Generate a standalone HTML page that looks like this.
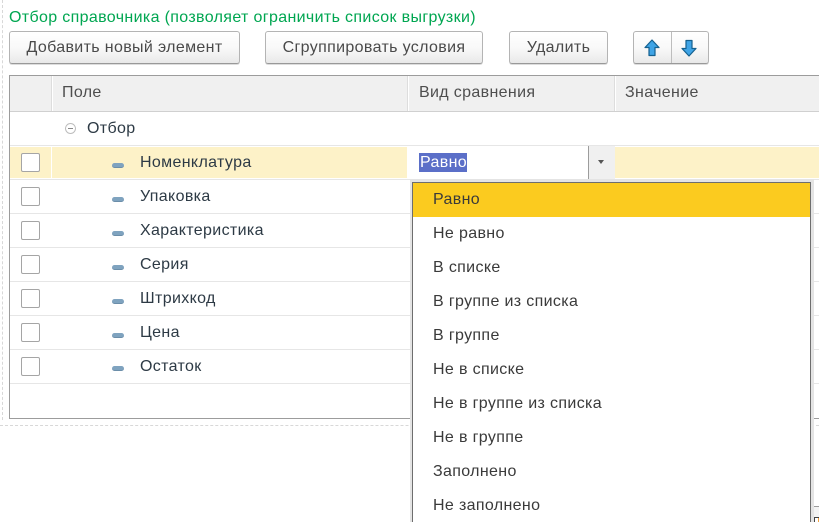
<!DOCTYPE html>
<html lang="ru">
<head>
<meta charset="utf-8">
<style>
html,body{margin:0;padding:0;background:#fff;width:819px;height:522px;overflow:hidden}
body{font-family:"Liberation Sans",Arial,sans-serif;font-size:16px;letter-spacing:.35px;color:#333}
#w{left:0;top:0;width:819px;height:522px;overflow:hidden;background:#fff}
div{position:absolute;box-sizing:border-box}
.t{white-space:nowrap;line-height:18px;height:18px}
.btn{top:31px;height:33px;border:1px solid #b4b4b4;border-bottom-color:#999;border-radius:3px;background:linear-gradient(#fff 0%,#f9f9f9 50%,#e9e9e9 100%);text-align:center;line-height:31px;color:#4a4a4a;white-space:nowrap;box-shadow:0 1px 0 #ddd}
.line{left:10px;width:809px;height:1px;background:#e6e6e6}
.cb{left:21px;width:19px;height:19px;border:1px solid #a5a5a5;border-radius:2px;background:#fff}
.dash{left:112px;width:12px;height:5px;border-radius:2.5px;background:#7fa3bf;border-bottom:1px solid #6b8ea9}
.name{left:140px;color:#2d3a45}
.head{top:84px;color:#4e4e4e}
.item{left:433px;color:#3a3a3a}
</style>
</head>
<body>
<div id="w">
<div style="left:2px;top:0;width:0;height:420px;border-left:1px dashed #d8d8d8"></div>
<div style="left:0;top:425px;width:819px;height:0;border-top:1px dashed #d8d8d8"></div>

<div class="t" style="left:9px;top:9px;color:#00a651">Отбор справочника (позволяет ограничить список выгрузки)</div>

<div class="btn" style="left:9px;width:231px">Добавить новый элемент</div>
<div class="btn" style="left:265px;width:218px">Сгруппировать условия</div>
<div class="btn" style="left:509px;width:99px">Удалить</div>
<div class="btn" style="left:633px;width:76px"></div>
<div style="left:671px;top:32px;width:1px;height:31px;background:#bdbdbd"></div>
<svg style="position:absolute;left:643px;top:38px" width="18" height="20" viewBox="0 0 18 20"><path d="M9 2 L16 9.500 H12 V17.500 H6 V9.500 H2 Z" fill="#3fa4e6" stroke="#14608f" stroke-width="1.200" stroke-linejoin="round"/></svg>
<svg style="position:absolute;left:680px;top:38px" width="18" height="20" viewBox="0 0 18 20"><path d="M9 18 L16 10.500 H12 V2.500 H6 V10.500 H2 Z" fill="#3fa4e6" stroke="#14608f" stroke-width="1.200" stroke-linejoin="round"/></svg>

<div style="left:9px;top:75px;width:830px;height:344px;border:1px solid #9c9c9c;border-right:0"></div>
<div style="left:10px;top:76px;width:809px;height:36px;background:#f0f0f0;border-bottom:1px solid #d0d0d0"></div>
<div style="left:51px;top:76px;width:2px;height:35px;background:#fff;border-left:1px solid #ddd"></div>
<div style="left:407px;top:76px;width:2px;height:35px;background:#fff;border-left:1px solid #ddd"></div>
<div style="left:614px;top:76px;width:2px;height:35px;background:#fff;border-left:1px solid #ddd"></div>
<div class="t head" style="left:62px">Поле</div>
<div class="t head" style="left:419px">Вид сравнения</div>
<div class="t head" style="left:625px">Значение</div>

<div style="left:65px;top:123px;width:11px;height:11px;border:1px solid #bdbdbd;border-radius:50%"></div>
<div style="left:68px;top:128px;width:5px;height:1px;background:#888"></div>
<div class="t" style="left:87px;top:120px;color:#2d3a45">Отбор</div>

<div class="line" style="top:145px"></div>
<div style="left:10px;top:147px;width:41px;height:31px;background:#fdf2c8"></div>
<div style="left:52px;top:147px;width:355px;height:31px;background:#fdf2c8"></div>
<div style="left:615px;top:147px;width:204px;height:31px;background:#fdf2c8"></div>
<div style="left:588px;top:146px;width:27px;height:33px;background:#f0f0f0;border-left:1px solid #9c9c9c"></div>
<div style="left:598px;top:160px;width:0;height:0;border:3px solid transparent;border-top:4px solid #555;border-bottom:0"></div>
<div class="t" style="left:419px;top:153px;height:19px;line-height:19px;background:#5b6fc8;color:#fff;padding:0 0 0 1px">Равно</div>

<div class="line" style="top:179px"></div>
<div class="line" style="top:213px"></div>
<div class="line" style="top:247px"></div>
<div class="line" style="top:281px"></div>
<div class="line" style="top:315px"></div>
<div class="line" style="top:349px"></div>
<div class="line" style="top:383px"></div>

<div class="cb" style="top:153px"></div>
<div class="cb" style="top:187px"></div>
<div class="cb" style="top:221px"></div>
<div class="cb" style="top:255px"></div>
<div class="cb" style="top:289px"></div>
<div class="cb" style="top:323px"></div>
<div class="cb" style="top:357px"></div>

<div class="dash" style="top:163px"></div>
<div class="dash" style="top:197px"></div>
<div class="dash" style="top:231px"></div>
<div class="dash" style="top:265px"></div>
<div class="dash" style="top:299px"></div>
<div class="dash" style="top:333px"></div>
<div class="dash" style="top:366px"></div>

<div class="t name" style="top:154px">Номенклатура</div>
<div class="t name" style="top:188px">Упаковка</div>
<div class="t name" style="top:222px">Характеристика</div>
<div class="t name" style="top:256px">Серия</div>
<div class="t name" style="top:290px">Штрихкод</div>
<div class="t name" style="top:324px">Цена</div>
<div class="t name" style="top:358px">Остаток</div>

<div style="left:410px;top:179px;width:404px;height:343px;background:#e4e4e4"></div>
<div style="left:412px;top:182px;width:399px;height:350px;background:#fff;border:1px solid #6e6e6e"></div>
<div style="left:413px;top:183px;width:397px;height:34px;background:#fbcb1f"></div>
<div class="t item" style="top:191px">Равно</div>
<div class="t item" style="top:225px">Не равно</div>
<div class="t item" style="top:259px">В списке</div>
<div class="t item" style="top:293px">В группе из списка</div>
<div class="t item" style="top:327px">В группе</div>
<div class="t item" style="top:361px">Не в списке</div>
<div class="t item" style="top:395px">Не в группе из списка</div>
<div class="t item" style="top:429px">Не в группе</div>
<div class="t item" style="top:463px">Заполнено</div>
<div class="t item" style="top:497px">Не заполнено</div>

<div style="left:814px;top:506px;width:5px;height:11px;background:#f3f3f3;border-top:1px solid #9c9c9c"></div>
<div style="left:814px;top:517px;width:5px;height:1px;background:#444"></div>
<div style="left:814px;top:518px;width:1px;height:4px;background:#444"></div>
<div style="left:818px;top:518px;width:1px;height:4px;background:#f0a040"></div>
</div>
</body>
</html>
